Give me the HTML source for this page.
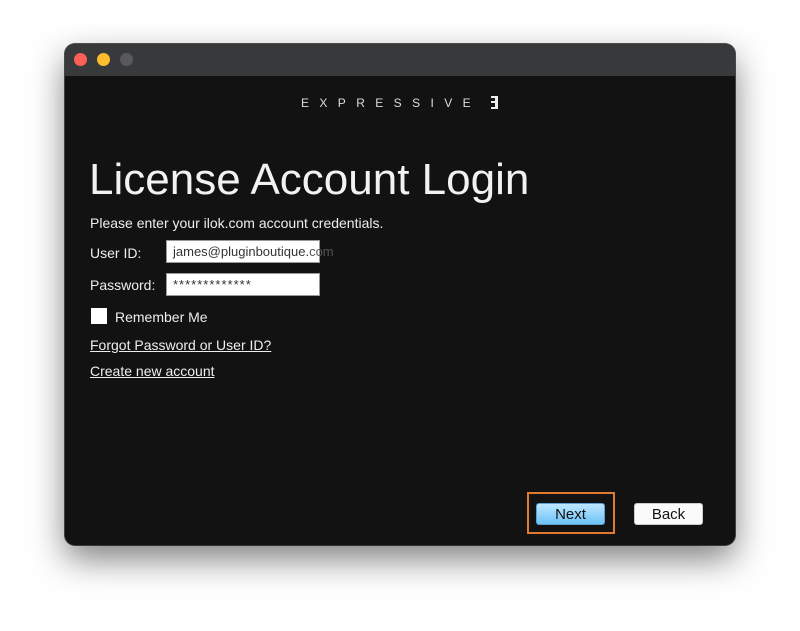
<!DOCTYPE html>
<html><head><meta charset="utf-8"><style>
*{margin:0;padding:0;box-sizing:border-box}
body{width:800px;height:631px;background:#fff;position:relative;overflow:hidden;font-family:"Liberation Sans",sans-serif}
.win{position:absolute;left:65px;top:44px;width:670px;height:501px;border-radius:10px;background:#121212;overflow:hidden;box-shadow:0 14px 34px rgba(0,0,0,.5),0 0 0 1px #555}
.tb{height:32px;background:#38393b}
.dot{position:absolute;top:9px;width:13px;height:13px;border-radius:50%}
.a{position:absolute}
.t{color:#eee;font-size:14px}
.inp{position:absolute;background:#fff;border:1px solid #999;height:23px;font-size:13px;color:#333;padding:3px 6px;white-space:nowrap}
.lnk{color:#eee;text-decoration:underline;font-size:14px}
.btn{position:absolute;height:22px;width:69px;border-radius:3px;font-size:15px;text-align:center;line-height:22px;color:#111}
</style></head><body>
<div class="win">
<div class="tb"></div>
<div class="dot" style="left:9px;background:#fe5f57"></div>
<div class="dot" style="left:32px;background:#febc2e"></div>
<div class="dot" style="left:55px;background:#59595b"></div>
<div class="a" style="left:236px;top:52px;color:#ddd;font-size:12px;letter-spacing:10.4px">EXPRESSIVE</div>
<div class="a" style="left:426px;top:52px;width:7px;height:13px;border-right:3px solid #eee"><div style="position:absolute;left:0;top:0;width:6px;height:2px;background:#eee"></div><div style="position:absolute;left:0;top:5px;width:6px;height:2px;background:#eee"></div><div style="position:absolute;left:0;top:11px;width:6px;height:2px;background:#eee"></div></div>
<div class="a" style="left:24px;top:111px;color:#f2f2f2;font-size:44px;white-space:nowrap">License Account Login</div>
<div class="a t" style="left:25px;top:171px">Please enter your ilok.com account credentials.</div>
<div class="a t" style="left:25px;top:201px">User ID:</div>
<div class="inp" style="left:101px;top:196px;width:154px">james@pluginboutique.<span style="color:#555">com</span></div>
<div class="a t" style="left:25px;top:233px">Password:</div>
<div class="inp" style="left:101px;top:229px;width:154px;letter-spacing:1px">*************</div>
<div class="a" style="left:26px;top:264px;width:16px;height:16px;background:#fff"></div>
<div class="a t" style="left:50px;top:265px">Remember Me</div>
<div class="a lnk" style="left:25px;top:293px">Forgot Password or User ID?</div>
<div class="a lnk" style="left:25px;top:319px">Create new account</div>
<div class="a" style="left:462px;top:448px;width:88px;height:42px;border:2px solid #e07a2e"></div>
<div class="btn" style="left:471px;top:459px;background:linear-gradient(#bfe6ff,#6cc3f7);border:1px solid #5aa0d0">Next</div>
<div class="btn" style="left:569px;top:459px;background:#fafafa;border:1px solid #ccc">Back</div>
</div>
</body></html>
